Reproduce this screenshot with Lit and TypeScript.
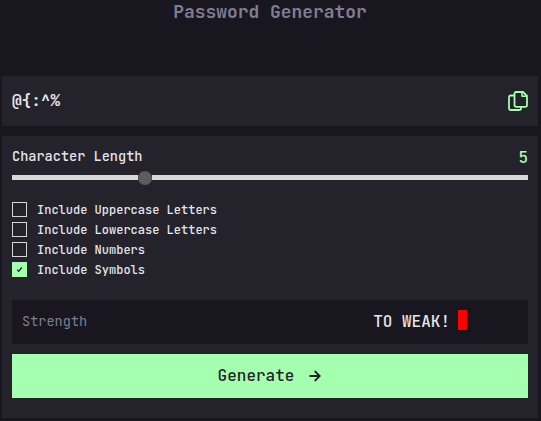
import { LitElement, html, css } from "lit";
import { customElement, state } from "lit/decorators.js";
import { classMap } from "lit/directives/class-map.js";

@customElement("app-root")
export class AppRoot extends LitElement {
  @state() private options = [
    { label: "Include Uppercase Letters", on: false },
    { label: "Include Lowercase Letters", on: false },
    { label: "Include Numbers", on: false },
    { label: "Include Symbols", on: true },
  ];

  static styles = css`
    :host {
      display: block;
      box-sizing: border-box;
      height: 421px;
      padding: 0 3px 0 2px;
      overflow: hidden;
      background: #18171f;
      color: #e6e5ea;
      font-family: "JetBrains Mono", "DejaVu Sans Mono", "Liberation Mono", monospace;
      font-size: 16px;
      font-weight: 500;
      line-height: 20px;
    }
    * { box-sizing: border-box; }
    h1 {
      margin: 0 0 52px;
      height: 24px;
      line-height: 24px;
      font-size: 17.92px;
      font-weight: 600;
      text-align: center;
      color: #817d92;
    }
    .result {
      display: flex;
      align-items: center;
      justify-content: space-between;
      height: 50px;
      padding: 0 10px;
      margin-bottom: 10px;
      background: #24232c;
      font-weight: 700;
    }
    .copy { display: block; width: 20px; height: 20px; }
    .panel {
      height: 282px;
      padding: 10px;
      background: #24232c;
    }
    .length {
      display: flex;
      justify-content: space-between;
      height: 26px;
    }
    .len { font-size: 13.6px; }
    .value { color: #a4ffaf; line-height: 23px; }
    .slider {
      display: flex;
      align-items: center;
      height: 14px;
      margin-top: -1px;
    }
    .track { height: 5px; margin-bottom: 1px; background: #d8d8d8; }
    .before { width: 126px; }
    .after { flex: 1; }
    .thumb {
      width: 14px;
      height: 14px;
      border-radius: 50%;
      background: #5c5c5c;
    }
    .options { margin: 15px 0 20px; }
    .option {
      display: flex;
      align-items: center;
      gap: 10px;
      height: 20px;
      font-size: 12px;
    }
    .box {
      width: 15px;
      height: 15px;
      margin-bottom: 1px;
      border: 1px solid #d6d5da;
      display: flex;
      align-items: center;
      justify-content: center;
    }
    .box.on { background: #a4ffaf; border-color: #a4ffaf; }
    .box svg { width: 7px; height: 7px; }
    .strength {
      display: flex;
      align-items: center;
      height: 44px;
      padding: 0 61px 0 10px;
      margin-bottom: 10px;
      background: #18171f;
    }
    .label { flex: 1; margin-bottom: 2px; font-size: 13.6px; font-weight: 400; color: #817d92; }
    .bar { width: 9px; height: 20px; margin: -4px 0 0 8px; background: #ff0000; }
    .generate {
      display: flex;
      align-items: center;
      justify-content: center;
      width: 100%;
      height: 44px;
      padding: 0 1px 0 0;
      border: 0;
      background: #a4ffaf;
      color: #24232c;
      font: inherit;
    }
    .arrow { width: 12px; height: 12px; margin-left: 15px; }
  `;

  render() {
    return html`
      <h1>Password Generator</h1>
      <div class="result"><span>@{:^%</span><svg class="copy" viewBox="0 0 20 20" fill="none" stroke="#a4ffaf" stroke-width="1.8" stroke-linejoin="round"><path d="M6.5 4.5H2.8Q1 4.5 1 6.3V17.2Q1 19 2.8 19H11.2Q13 19 13 17.2V15.8"/><path d="M8.3 1H15L19 5V14Q19 15.8 17.2 15.8H8.3Q6.5 15.8 6.5 14V2.8Q6.5 1 8.3 1Z"/><path d="M14 1V5.2H19" stroke-width="1.5"/></svg></div>
      <div class="panel">
        <div class="length"><span class="len">Character Length</span><span class="value">5</span></div>
        <div class="slider"><div class="track before"></div><div class="thumb"></div><div class="track after"></div></div>
        <div class="options">${this.options.map(
          (o) => html`<div class="option"><span class=${classMap({ box: true, on: o.on })}>${o.on
            ? html`<svg viewBox="0 0 7 7" fill="none" stroke="#18171f" stroke-width="1.2"><path d="M1.2 3.6L2.7 5.3L5.8 1.5"/></svg>`
            : ""}</span><span>${o.label}</span></div>`
        )}</div>
        <div class="strength"><span class="label">Strength</span><span>TO WEAK!</span><span class="bar"></span></div>
        <button class="generate"><span>Generate</span><svg class="arrow" viewBox="0 0 12 12" fill="none" stroke="#24232c" stroke-width="1.8"><path d="M0.5 6H10.5M5.7 1L10.7 6L5.7 11"/></svg></button>
      </div>
    `;
  }
}
